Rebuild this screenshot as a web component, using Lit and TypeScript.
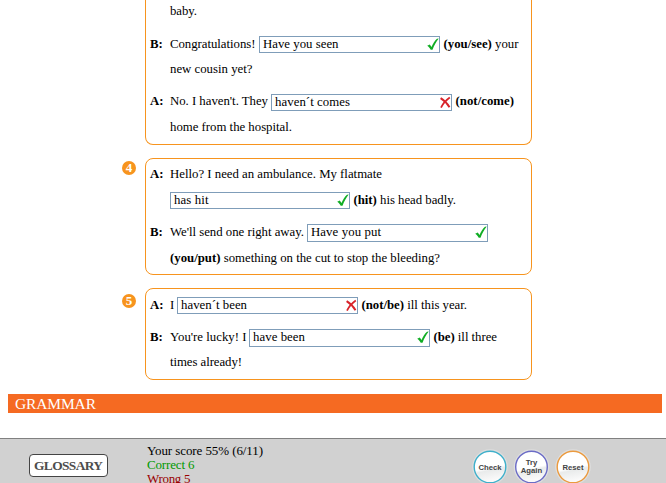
import { LitElement, html, css, svg } from "lit";
import { customElement, property } from "lit/decorators.js";

type Answer = { value: string; ok: boolean; w: number; h: number; gap: number; textW: number; dy?: number };
type Line = {
  top: number;
  label?: string;
  text?: string;
  textW?: number;
  hint?: string;
  tail?: string;
  tailW?: number;
  answer?: Answer;
};
type Exercise = { num?: number; numTop?: number; height: number; lines: Line[] };

const exercises: Exercise[] = [
  { height: 145, lines: [
    { top: 3, text: "baby.", textW: 27 },
    { top: 16, label: "B:", text: "Congratulations!", textW: 85.5, answer: { value: "Have you seen", ok: true, w: 181, h: 17, gap: 89, textW: 75.5 }, hint: "(you/see)", tail: " your", tailW: 75 },
    { top: 8, text: "new cousin yet?", textW: 82.5 },
    { top: 15, label: "A:", text: "No. I haven't. They", textW: 98, answer: { value: "haven´t comes", ok: false, w: 181, h: 17, gap: 101, textW: 75, dy: 1 }, hint: "(not/come)", tailW: 58.5 },
    { top: 9, text: "home from the hospital.", textW: 122 },
  ] },
  { num: 4, numTop: 3, height: 117, lines: [
    { top: 7, label: "A:", text: "Hello? I need an ambulance. My flatmate", textW: 212 },
    { top: 9, answer: { value: "has hit", ok: true, w: 180, h: 17, gap: 0, textW: 34.5 }, hint: "(hit)", tail: " his head badly.", tailW: 102.5 },
    { top: 15, label: "B:", text: "We'll send one right away.", textW: 134, answer: { value: "Have you put", ok: true, w: 181, h: 18, gap: 137, textW: 70 } },
    { top: 9, hint: "(you/put)", tail: " something on the cut to stop the bleeding?", tailW: 270 },
  ] },
  { num: 5, numTop: 6, height: 92, lines: [
    { top: 8, label: "A:", text: "I", textW: 4, answer: { value: "haven´t been", ok: false, w: 181, h: 17, gap: 7, textW: 66 }, hint: "(not/be)", tail: " ill this year.", tailW: 105.5 },
    { top: 15, label: "B:", text: "You're lucky! I", textW: 76.5, answer: { value: "have been", ok: true, w: 181, h: 18, gap: 79, textW: 52 }, hint: "(be)", tail: " ill three", tailW: 63.5 },
    { top: 8, text: "times already!", textW: 72 },
  ] },
];

/* A run of text tracked out to the width it is given. */
@customElement("fit-text")
class FitText extends LitElement {
  @property({ type: Number }) width = 0;
  static styles = css`
    :host { display: inline-block; white-space: pre; flex: none; }
  `;
  render() { return html`<slot></slot>`; }
  firstUpdated() {
    requestAnimationFrame(() => {
      const n = (this.textContent ?? "").length;
      const natural = this.getBoundingClientRect().width;
      if (this.width && n > 1) this.style.letterSpacing = `${(this.width - natural) / (n - 1)}px`;
    });
  }
}

const tick = svg`<svg width="12" height="13" viewBox="0 0 12 13"><path d="M.2 7.800 2.800 6.400 4.500 8.900C6 5.500 7.800 2.400 10 .8L11.700.5C9.200 3.700 7.200 7.300 5.500 11.800H3.700C2.800 10 1.700 8.800.2 7.800Z" fill="#10ad24"/></svg>`;
const cross = svg`<svg width="12" height="13" viewBox="0 0 12 13"><path d="M1.600 2.200C5 4.200 8 7.300 10.500 11.200" stroke="#d8232a" stroke-width="2" fill="none"/><path d="M10.800 1.500C7 4.200 4 7.400 2 11.600" stroke="#d8232a" stroke-width="1.700" fill="none"/></svg>`;

@customElement("app-root")
class AppRoot extends LitElement {
  static styles = css`
    :host { display: flex; flex-direction: column; width: 666px; height: 483px; overflow: hidden; background: #fff; color: #000; font-family: "Liberation Serif", "Times New Roman", serif; font-size: 12.8px; }
    * { box-sizing: border-box; }
    .exercise { display: flex; margin-bottom: 13px; flex: none; }
    .side { width: 145px; padding-right: 9px; display: flex; justify-content: flex-end; flex: none; }
    .num { width: 14px; height: 14px; border-radius: 50%; background: #f7941e; color: #fff; font-weight: bold; font-size: 13px; line-height: 14px; text-align: center; }
    .panel { width: 387px; border: 1px solid #f7941e; border-radius: 8px; }
    .panel.open { border-top: 0; border-radius: 0 0 8px 8px; }
    .line { height: 17px; display: flex; line-height: 17px; white-space: pre; }
    .label { width: 24px; padding-left: 4px; font-weight: bold; flex: none; }
    .lead { flex: none; }
    .answer { border: 1px solid #7f9db9; display: flex; justify-content: space-between; align-items: flex-start; padding: 0 0 0 3px; line-height: 15px; margin-right: 3.5px; flex: none; }
    .answer svg { display: block; margin-top: 1px; }
    .bar { margin: 1px 4px 0 8px; height: 19px; background: #f56a22; color: #fff; font-size: 15.5px; line-height: 19px; padding-left: 7px; flex: none; }
    .foot { margin-top: 25px; height: 45px; border-top: 1px solid #808080; background: #d1d1d1; display: flex; flex: none; }
    .glossary { margin: 15px 0 0 29px; width: 79px; height: 23px; border: 1px solid #444; border-radius: 4px; background: #fff; color: #4d4d4d; font-weight: bold; font-size: 13.4px; line-height: 21px; padding-left: 4px; }
    .score { margin: 5px 0 0 39px; width: 320px; font-size: 13px; line-height: 14px; }
    .score div { height: 14px; }
    .good { color: #009900; }
    .bad { color: #990000; }
    .buttons { display: block; margin-top: 8px; flex: none; }
  `;
  render() {
    return html`
      ${exercises.map(e => html`
        <div class="exercise">
          <div class="side">${e.num ? html`<div class="num" style="margin-top:${e.numTop ?? 0}px">${e.num}</div>` : ""}</div>
          <div class="panel ${e.num ? "" : "open"}" style="height:${e.height}px">${e.lines.map(l => this.line(l))}</div>
        </div>`)}
      <div class="bar"><fit-text width="81">GRAMMAR</fit-text></div>
      <div class="foot">
        <div class="glossary"><fit-text width="69">GLOSSARY</fit-text></div>
        <div class="score">
          <div><fit-text width="116">Your score 55% (6/11)</fit-text></div>
          <div class="good"><fit-text width="47.5">Correct 6</fit-text></div>
          <div class="bad"><fit-text width="43.5">Wrong 5</fit-text></div>
        </div>
        <svg class="buttons" width="124" height="40" viewBox="0 0 124 40">
          <defs><linearGradient id="g" x1="0" y1="0" x2=".2" y2="1"><stop offset=".6" stop-color="#fff"/><stop offset=".68" stop-color="#e9ebeb"/><stop offset="1" stop-color="#fafafa"/></linearGradient></defs>
          ${this.round(23, "#3fb0cb", ["Check"])}${this.round(64.500, "#6b6cc6", ["Try", "Again"])}${this.round(106, "#eb9a3e", ["Reset"])}
        </svg>
      </div>`;
  }
  line(l: Line) {
    const a = l.answer;
    return html`<div class="line" style="margin-top:${l.top}px">
      <span class="label">${l.label ?? ""}</span>${l.text || a ? html`<span class="lead" style=${a ? `width:${a.gap}px` : ""}>${l.text ? html`<fit-text .width=${l.textW ?? 0}>${l.text}</fit-text>` : ""}</span>` : ""}${a ? html`<span class="answer" style="width:${a.w}px;height:${a.h}px;margin-top:${a.dy ?? 0}px"><fit-text .width=${a.textW}>${a.value}</fit-text>${a.ok ? tick : cross}</span>` : ""}${l.hint ? html`<fit-text .width=${l.tailW ?? 0}><b>${l.hint}</b>${l.tail ?? ""}</fit-text>` : ""}</div>`;
  }
  round(cx: number, color: string, words: string[]) {
    return svg`<circle cx=${cx} cy="20" r="17.800" fill="#dedede"/><circle cx=${cx} cy="20" r="15.800" fill="url(#g)" stroke=${color} stroke-width="1.400"/>
      ${words.map((w, i) => svg`<text x=${cx} y=${words.length > 1 ? 17.5 + i * 8.500 : 22.500} text-anchor="middle" font-family="Liberation Sans, sans-serif" font-weight="bold" font-size="7.700" fill="#444">${w}</text>`)}`;
  }
}
